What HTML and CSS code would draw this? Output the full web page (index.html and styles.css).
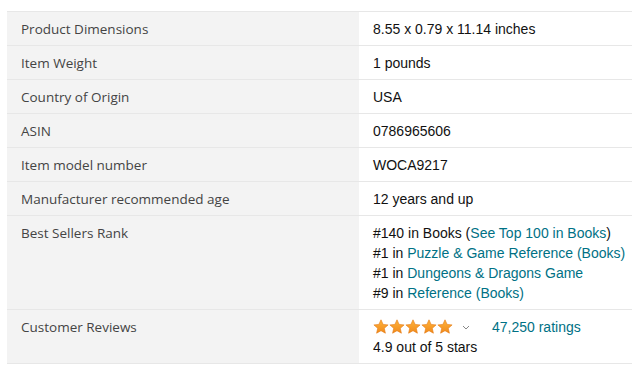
FILE: index.html
```html
<!DOCTYPE html>
<html>
<head>
<meta charset="utf-8">
<link rel="stylesheet" href="styles.css">
</head>
<body>
<svg width="0" height="0" class="defs">
  <defs>
    <linearGradient id="sg" x1="0" y1="0" x2="0" y2="1">
      <stop offset="0" stop-color="#ffb33a"/>
      <stop offset="1" stop-color="#f08a1c"/>
    </linearGradient>
    <symbol id="star" viewBox="0 0 16 16">
      <path d="M8 0.8l2.1 4.6 5 .5-3.8 3.4 1.1 4.9L8 11.7l-4.4 2.5 1.1-4.9L.9 5.9l5-.5z" fill="url(#sg)" stroke="#e47911" stroke-width="0.6" stroke-linejoin="round"/>
    </symbol>
  </defs>
</svg>
<div class="table">
  <div class="row"><div class="label">Product Dimensions</div><div class="value">8.55 x 0.79 x 11.14 inches</div></div>
  <div class="row"><div class="label">Item Weight</div><div class="value">1 pounds</div></div>
  <div class="row"><div class="label">Country of Origin</div><div class="value">USA</div></div>
  <div class="row"><div class="label">ASIN</div><div class="value">0786965606</div></div>
  <div class="row"><div class="label">Item model number</div><div class="value">WOCA9217</div></div>
  <div class="row"><div class="label">Manufacturer recommended age</div><div class="value">12 years and up</div></div>
  <div class="row"><div class="label">Best Sellers Rank</div>
    <div class="value">
      <div>#140 in Books (<a class="link">See Top 100 in Books</a>)</div>
      <div>#1 in <a class="link">Puzzle &amp; Game Reference (Books)</a></div>
      <div>#1 in <a class="link">Dungeons &amp; Dragons Game</a></div>
      <div>#9 in <a class="link">Reference (Books)</a></div>
    </div>
  </div>
  <div class="row"><div class="label">Customer Reviews</div>
    <div class="value">
      <div class="rating">
        <span class="stars">
          <svg class="star"><use href="#star"/></svg><svg class="star"><use href="#star"/></svg><svg class="star"><use href="#star"/></svg><svg class="star"><use href="#star"/></svg><svg class="star"><use href="#star"/></svg>
        </span>
        <svg class="chev" viewBox="0 0 8 5"><path d="M1 1l3 3 3-3" fill="none" stroke="#888" stroke-width="1"/></svg>
        <a class="link count">47,250 ratings</a>
      </div>
      <div>4.9 out of 5 stars</div>
    </div>
  </div>
</div>
</body>
</html>
```
FILE: styles.css
```css
html, body { margin: 0; padding: 0; background: #fff; }
body { padding: 11px 0 0 7px; }
.defs { position: absolute; }
.table {
  border-top: 1px solid #e7e7e7;
  font-size: 14px;
}
.row {
  display: grid;
  grid-template-columns: 352px 1fr;
  border-bottom: 1px solid #e7e7e7;
}
.label {
  background: #f3f3f3;
  color: #444;
  font-family: "Open Sans", "Noto Sans", sans-serif;
  font-size: 13.5px;
  line-height: 20px;
  padding: 7px 14px 6px 14px;
}
.value {
  color: #111;
  font-family: "Liberation Sans", Arial, sans-serif;
  line-height: 20px;
  padding: 7px 0 6px 14px;
  white-space: nowrap;
  min-width: 0;
}
.link { color: #007185; text-decoration: none; }
.rating { display: flex; align-items: center; height: 20px; }
.stars { display: flex; }
.star { width: 16px; height: 16px; }
.chev { width: 8px; height: 5px; margin-left: 9px; }
.count { margin-left: 22px; }
```
